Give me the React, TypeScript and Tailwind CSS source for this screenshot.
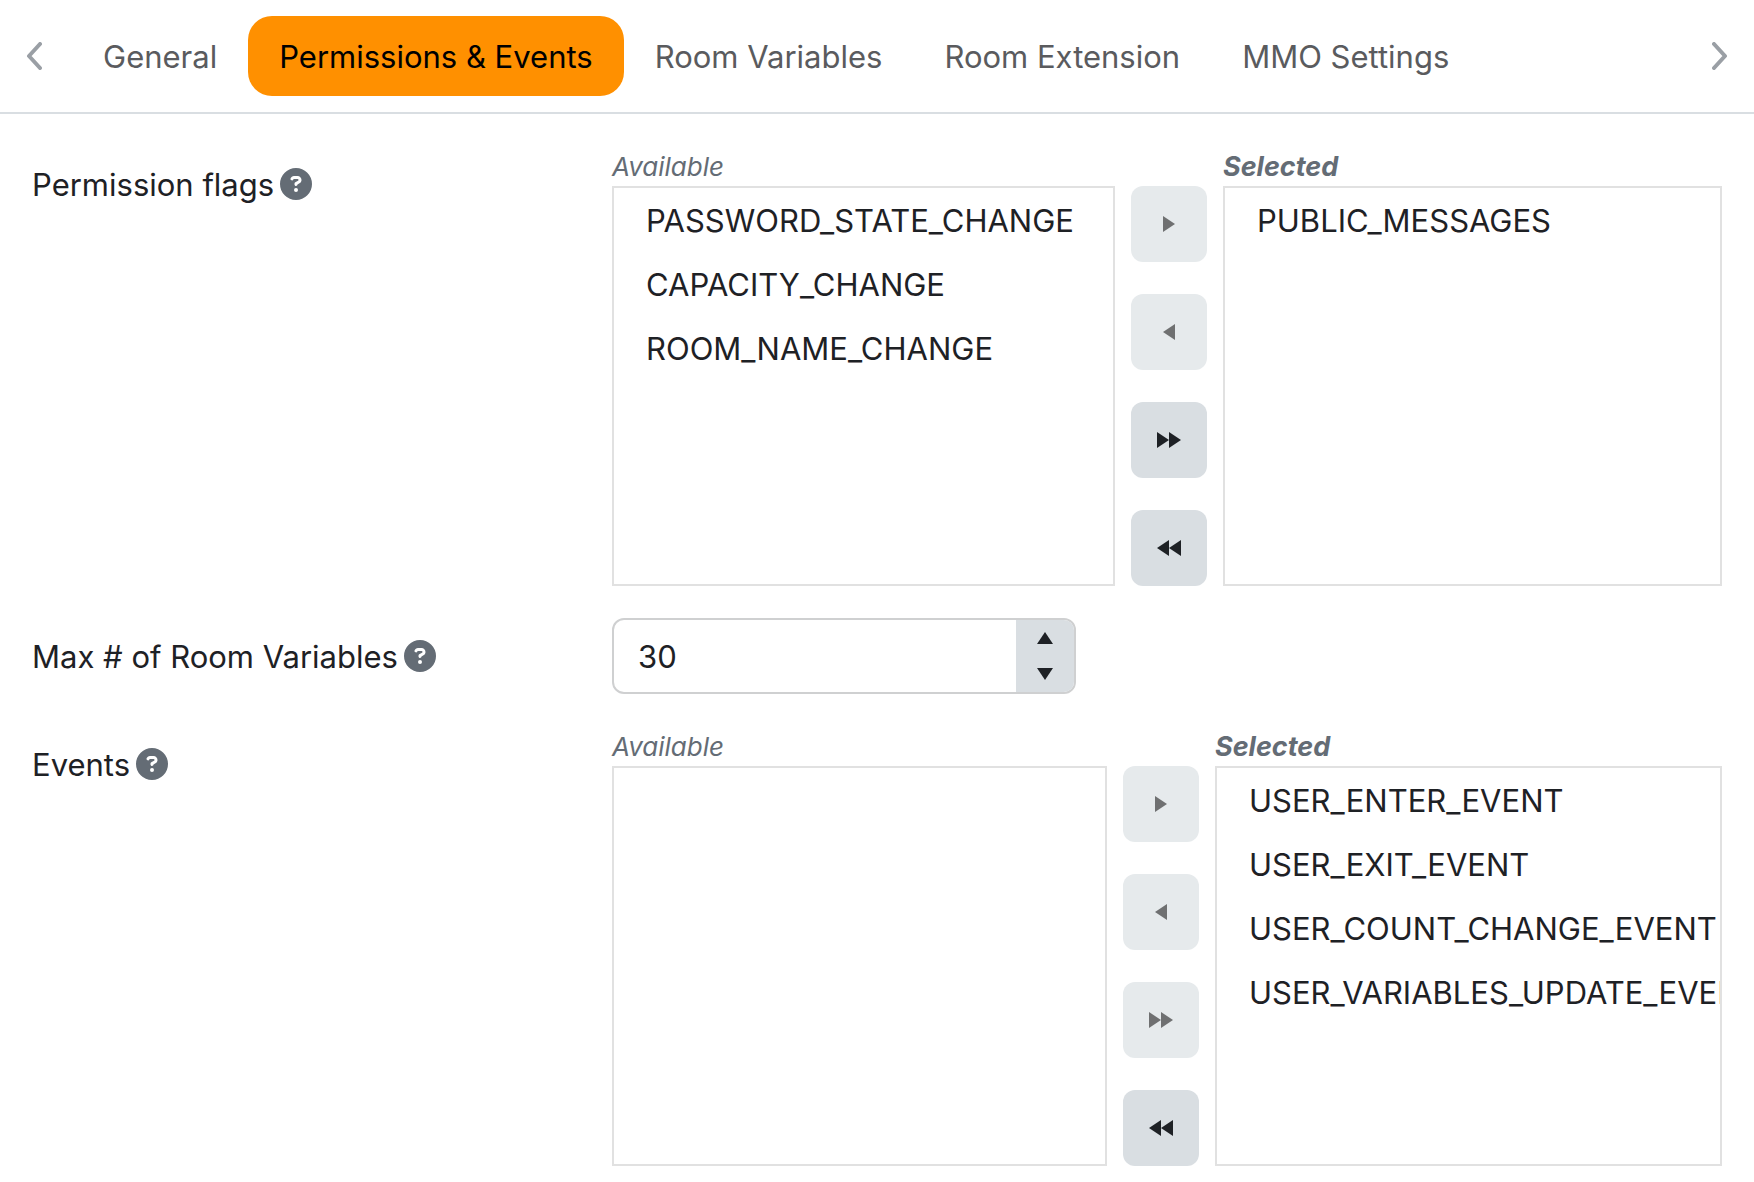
import { useState } from "react";
import { FaCircleQuestion } from "react-icons/fa6";

const TABS = ["General", "Permissions & Events", "Room Variables", "Room Extension", "MMO Settings"];

const ARROWS = {
  right: "M0 0 12 8 0 16Z",
  left: "M12 0 0 8 12 16Z",
};

function HelpLabel({ text, htmlFor }: { text: string; htmlFor?: string }) {
  return (
    <div className="flex h-[76px] items-center gap-1.5">
      <label htmlFor={htmlFor} className="pt-0.5">{text}</label>
      <FaCircleQuestion size={32} className="shrink-0 text-[#646c75]" aria-hidden="true" />
    </div>
  );
}

function MoveButton({ dir, all, label, disabled, onClick }: {
  dir: "left" | "right";
  all?: boolean;
  label: string;
  disabled: boolean;
  onClick: () => void;
}) {
  return (
    <button
      type="button"
      aria-label={label}
      disabled={disabled}
      onClick={onClick}
      className="flex size-[76px] items-center justify-center rounded-xl bg-[#d9dee2] text-[#1e2125] disabled:bg-[#e6eaec] disabled:text-[#6f7071]"
    >
      <svg width={all ? 24 : 12} height="16" fill="currentColor" aria-hidden="true">
        <path d={ARROWS[dir]} />
        {all && <path d={ARROWS[dir]} transform="translate(12 0)" />}
      </svg>
    </button>
  );
}

function ListBox({ items, label, picked, onPick }: {
  items: string[];
  label: string;
  picked: string | null;
  onPick: (item: string) => void;
}) {
  return (
    <ul role="listbox" aria-label={label} className="h-[400px] overflow-hidden border-2 border-[#e1e1e1]">
      {items.map((item) => (
        <li
          key={item}
          role="option"
          aria-selected={picked === item}
          onClick={() => onPick(item)}
          className={`h-16 px-8 leading-[66px] whitespace-nowrap ${picked === item ? "bg-[#ffe4bf]" : ""}`}
        >
          {item}
        </li>
      ))}
    </ul>
  );
}

function DualList({ name, initialAvailable, initialSelected, columns }: {
  name: string;
  initialAvailable: string[];
  initialSelected: string[];
  columns: string;
}) {
  const [available, setAvailable] = useState(initialAvailable);
  const [selected, setSelected] = useState(initialSelected);
  const [picked, setPicked] = useState<string | null>(null);

  const canAdd = picked !== null && available.includes(picked);
  const canRemove = picked !== null && selected.includes(picked);

  function move(toSelected: boolean, items: string[]) {
    const keep = (list: string[]) => list.filter((i) => !items.includes(i));
    setAvailable(toSelected ? keep(available) : [...available, ...items]);
    setSelected(toSelected ? [...selected, ...items] : keep(selected));
    setPicked(null);
  }

  return (
    <div className={`grid gap-x-4 ${columns}`}>
      <div className="min-w-0">
        <div className="h-10 text-[26px] leading-[42px] text-[#646c75] italic">Available</div>
        <ListBox items={available} label={`${name} available`} picked={picked} onPick={setPicked} />
      </div>
      <div className="flex flex-col gap-8 pt-10">
        <MoveButton dir="right" label="Add" disabled={!canAdd} onClick={() => move(true, [picked!])} />
        <MoveButton dir="left" label="Remove" disabled={!canRemove} onClick={() => move(false, [picked!])} />
        <MoveButton dir="right" all label="Add all" disabled={!available.length} onClick={() => move(true, available)} />
        <MoveButton dir="left" all label="Remove all" disabled={!selected.length} onClick={() => move(false, selected)} />
      </div>
      <div className="min-w-0">
        <div className="h-10 text-[27px] leading-[42px] font-bold text-[#646c75] italic">Selected</div>
        <ListBox items={selected} label={`${name} selected`} picked={picked} onPick={setPicked} />
      </div>
    </div>
  );
}

function NumberField({ id }: { id: string }) {
  const [value, setValue] = useState(30);

  return (
    <div className="flex h-[76px] w-[464px] overflow-hidden rounded-xl border-2 border-[#cfd0d1]">
      <input
        id={id}
        type="number"
        value={value}
        onChange={(e) => setValue(Number(e.target.value))}
        className="min-w-0 flex-1 px-6 pt-0.5 outline-none [appearance:textfield] [&::-webkit-inner-spin-button]:appearance-none"
      />
      <div className="flex w-[58px] flex-col bg-[#d9dee2] text-[#1e2125]">
        <button type="button" aria-label="Increase" onClick={() => setValue(value + 1)} className="flex flex-1 items-center justify-center">
          <svg width="16" height="12" fill="currentColor" aria-hidden="true"><path d="M8 0 16 12H0Z" /></svg>
        </button>
        <button type="button" aria-label="Decrease" onClick={() => setValue(value - 1)} className="flex flex-1 items-center justify-center">
          <svg width="16" height="12" fill="currentColor" aria-hidden="true"><path d="M0 0H16L8 12Z" /></svg>
        </button>
      </div>
    </div>
  );
}

function ScrollButton({ label, d }: { label: string; d: string }) {
  return (
    <button type="button" aria-label={label} className="flex w-[68px] shrink-0 items-center justify-center text-[#9a9fa5]">
      <svg width="16" height="28" fill="none" stroke="currentColor" strokeWidth="4" strokeLinecap="round" strokeLinejoin="round" aria-hidden="true">
        <path d={d} />
      </svg>
    </button>
  );
}

export default function App() {
  const [tab, setTab] = useState("Permissions & Events");

  return (
    <div className="bg-white font-[Inter,'Liberation_Sans',sans-serif] text-[31px] leading-[48px] text-[#1e2125]">
      {/* Tab strip */}
      <header className="flex border-b-2 border-[#d9dee2]">
        <ScrollButton label="Scroll tabs left" d="M14 2 3 14 14 26" />
        <div role="tablist" className="flex min-w-0 flex-1 overflow-hidden py-4 pl-1">
          {TABS.map((name) => (
            <button
              key={name}
              type="button"
              role="tab"
              aria-selected={tab === name}
              onClick={() => setTab(name)}
              className={`h-20 shrink-0 rounded-3xl px-[31px] pt-0.5 whitespace-nowrap ${tab === name ? "bg-[#ff9000] text-black" : "text-[#5a5b5e]"}`}
            >
              {name}
            </button>
          ))}
        </div>
        <ScrollButton label="Scroll tabs right" d="M2 2 13 14 2 26" />
      </header>

      {/* Settings form */}
      <main className="grid grid-cols-[1fr_2fr] gap-x-[25px] gap-y-8 px-8 pt-8 pb-4">
        <HelpLabel text="Permission flags" />
        <DualList
          name="Permission flags"
          initialAvailable={["PASSWORD_STATE_CHANGE", "CAPACITY_CHANGE", "ROOM_NAME_CHANGE"]}
          initialSelected={["PUBLIC_MESSAGES"]}
          columns="grid-cols-[503fr_76px_499fr]"
        />

        <HelpLabel text="Max # of Room Variables" htmlFor="max-room-variables" />
        <NumberField id="max-room-variables" />

        <HelpLabel text="Events" />
        <DualList
          name="Events"
          initialAvailable={[]}
          initialSelected={["USER_ENTER_EVENT", "USER_EXIT_EVENT", "USER_COUNT_CHANGE_EVENT", "USER_VARIABLES_UPDATE_EVENT"]}
          columns="grid-cols-[495fr_76px_507fr]"
        />
      </main>
    </div>
  );
}
